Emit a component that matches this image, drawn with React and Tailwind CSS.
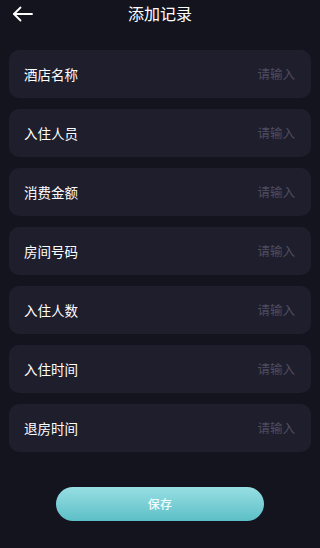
const FIELDS = ['酒店名称', '入住人员', '消费金额', '房间号码', '入住人数', '入住时间', '退房时间']

export default function App() {
  return (
    <div
      className="w-[320px] h-[548px] bg-[#14141f] text-white overflow-hidden"
      style={{ fontFamily: '"Noto Sans CJK SC", "Noto Sans", sans-serif' }}
    >
      {/* header */}
      <div className="relative h-[26px] flex items-center justify-center">
        <button className="absolute left-[12px] top-[6px] text-white">
          <svg width="22" height="16" viewBox="0 0 22 16" fill="none" stroke="currentColor" strokeWidth="1.8" strokeLinecap="round" strokeLinejoin="round">
            <path d="M20 8H2" />
            <path d="M8.5 1.5L2 8l6.5 6.5" />
          </svg>
        </button>
        <h1 className="text-[16px] leading-none font-normal">添加记录</h1>
      </div>

      {/* fields */}
      <div className="mt-[24px] px-[9px] flex flex-col gap-[11px]">
        {FIELDS.map((name) => (
          <div
            key={name}
            className="h-[48px] rounded-[10px] bg-[#1f1e2d] flex items-center justify-between pl-[15px] pr-[16px]"
          >
            <span className="text-[13.5px] text-white">{name}</span>
            <input
              placeholder="请输入"
              className="w-[100px] text-right bg-transparent outline-none text-[12.5px] text-white placeholder:text-[#4d4c60]"
            />
          </div>
        ))}
      </div>

      {/* save */}
      <div className="mt-[35px] flex justify-center">
        <button className="w-[208px] h-[34px] rounded-full bg-gradient-to-b from-[#96dfe3] to-[#5cbfc7] text-[12px] text-white/90 font-medium tracking-wide">
          保存
        </button>
      </div>
    </div>
  )
}
